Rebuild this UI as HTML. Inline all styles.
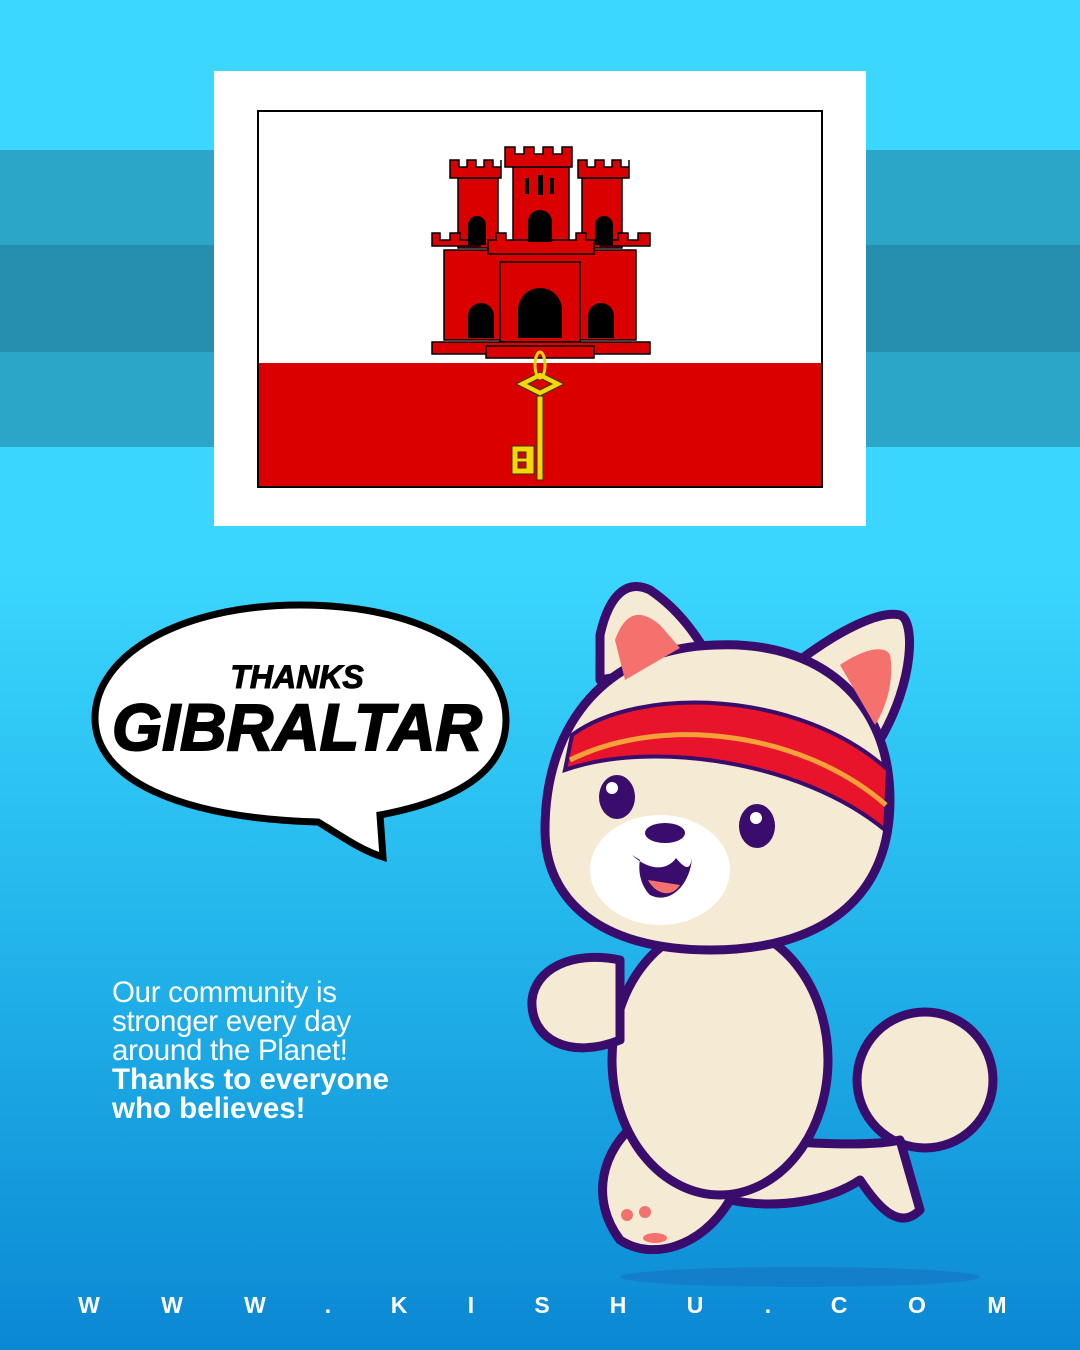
<!DOCTYPE html>
<html><head><meta charset="utf-8"><style>
body{margin:0}
#p{position:relative;width:1080px;height:1350px;overflow:hidden;background:linear-gradient(#3bd7ff 0%,#3bd6fe 42%,#22b4ea 70%,#0b88d3 100%);font-family:"Liberation Sans",sans-serif}
.s{position:absolute;left:0;width:1080px}
#txt{position:absolute;left:112px;top:978px;color:#fff;font-size:29.5px;line-height:29px;font-weight:300;letter-spacing:-0.3px}
#txt b{font-weight:700;letter-spacing:0}
#ft{position:absolute;top:1292px;left:0;width:1080px;color:#fff;font-size:23px;font-weight:700}
#ft span{position:absolute;transform:translateX(-50%)}
</style></head><body><div id="p">
<div class="s" style="top:150px;height:95px;background:#2ba5c8"></div>
<div class="s" style="top:245px;height:107px;background:#258eaf"></div>
<div class="s" style="top:352px;height:95px;background:#2ba5c8"></div>
<div style="position:absolute;left:214px;top:71px;width:652px;height:455px;background:#fff"></div>
<svg style="position:absolute;left:0;top:0" width="1080" height="1350">
<rect x="258" y="111" width="564" height="376" fill="#fff" stroke="#000" stroke-width="2"/>
<rect x="259" y="363" width="562" height="123" fill="#da0000"/>
<g fill="#da0000" stroke="#000" stroke-width="1.5">
<rect x="458" y="178" width="40" height="70"/><rect x="582" y="178" width="40" height="70"/>
<path d="M450 160h9v7h8v-7h9v7h8v-7h9v7h8v-7h0v18h-51z"/>
<path d="M578 160h9v7h8v-7h9v7h8v-7h9v7h8v-7v18h-51z"/>
<rect x="513" y="167" width="56" height="80"/>
<path d="M505 147h10v7h9v-7h10v7h9v-7h10v7h9v-7h10v20h-67z"/>
<rect x="444" y="250" width="192" height="90"/>
<path d="M432 233h8v7h10v-7h10v7h10v-7h10v13h-48z"/><path d="M600 233h8v7h10v-7h10v7h10v-7h12v13h-50z"/>
<path d="M488 240h8v-7h10v7h70v-7h10v7h8v14h-106z"/>
<rect x="500" y="262" width="80" height="80"/>
<path d="M432 342h218v12h-218z"/><path d="M486 346h108v12h-108z"/>
</g>
<g fill="#000">
<path d="M468 338v-22a10 10 0 0 1 26 0v22z"/><path d="M588 338v-22a10 10 0 0 1 26 0v22z"/>
<path d="M518 338v-28a22 22 0 0 1 44 0v28z"/>
<path d="M468 245v-20a9 9 0 0 1 18 0v20z"/><path d="M595 245v-20a9 9 0 0 1 18 0v20z"/>
<path d="M528 242v-20a12 12 0 0 1 24 0v20z"/>
<rect x="525" y="178" width="4" height="16"/><rect x="538" y="175" width="5" height="20"/><rect x="550" y="178" width="4" height="16"/>
</g>
<g fill="#f5d800" stroke="#333" stroke-width="1">
<path d="M540 372l24 12-24 12-24-12z M540 378l-12 6 12 6 12-6z" fill-rule="evenodd"/>
<rect x="537" y="396" width="6" height="84"/>
<path d="M512 446h22v28h-22z M518 452v6h8v-6z M518 462v6h8v-6z" fill-rule="evenodd"/>
<ellipse cx="540" cy="365" rx="5" ry="13" fill="none" stroke="#f5d800" stroke-width="3"/>
</g>
<path d="M300 605C430 605 506 660 506 720C506 770 460 800 380 815L383 857C360 850 340 835 318 822C180 818 95 780 95 718C95 655 180 605 300 605Z" fill="#fff" stroke="#000" stroke-width="7"/>
<text x="297" y="688" text-anchor="middle" font-family="Liberation Sans" font-weight="700" font-style="italic" font-size="32" stroke="#000" stroke-width="1">THANKS</text>
<text x="297" y="750" text-anchor="middle" font-family="Liberation Sans" font-weight="700" font-style="italic" font-size="66" stroke="#000" stroke-width="2" textLength="370" lengthAdjust="spacingAndGlyphs">GIBRALTAR</text>
<ellipse cx="800" cy="1277" rx="180" ry="10" fill="#1577c6" opacity=".7"/>
<g stroke="#3a0c6b" stroke-width="9" stroke-linejoin="round">
<circle cx="925" cy="1080" r="68" fill="#f5ead3"/>
<path d="M640 1120C600 1150 590 1200 620 1240C650 1260 700 1250 730 1200C780 1210 830 1200 860 1180C880 1210 900 1230 920 1210L900 1140C860 1150 720 1140 640 1120Z" fill="#f5ead3"/>
<ellipse cx="720" cy="1060" rx="108" ry="135" fill="#f5ead3"/>
<path d="M620 960C570 950 535 970 532 1000C530 1040 570 1060 620 1040Z" fill="#f5ead3"/>
<path d="M600 635C610 590 630 580 650 590C680 610 700 640 710 660L600 680Z" fill="#f5ead3"/>
<path d="M800 660C840 630 880 610 900 615C915 620 915 680 880 740L800 700Z" fill="#f5ead3"/>
<path d="M715 645C820 640 890 700 890 800C890 900 820 950 710 950C600 950 545 900 545 830C545 720 610 648 715 645Z" fill="#f5ead3"/>
</g>
<path d="M615 640C625 612 640 608 660 625L680 648L625 680Z" fill="#f4716e"/>
<path d="M840 665C865 648 885 645 890 655C895 680 885 710 875 725Z" fill="#f4716e"/>
<path d="M572 735C640 685 800 690 888 770L885 830C800 760 650 740 565 770Z" fill="#e8142c" stroke="#3a0c6b" stroke-width="4"/>
<path d="M570 760C660 715 800 730 886 805" fill="none" stroke="#f5a13a" stroke-width="5"/>
<ellipse cx="660" cy="870" rx="70" ry="55" fill="#fff"/>
<ellipse cx="617" cy="797" rx="18" ry="22" fill="#3a0c6b"/><circle cx="612" cy="788" r="6" fill="#fff"/>
<ellipse cx="757" cy="826" rx="18" ry="22" fill="#3a0c6b"/><circle cx="756" cy="818" r="6" fill="#fff"/>
<ellipse cx="665" cy="833" rx="20" ry="10" fill="#3a0c6b"/>
<path d="M632 855C650 872 668 870 676 858C686 870 690 870 692 858C690 885 670 905 650 895C640 885 638 870 640 860Z" fill="#3a0c6b"/>
<path d="M648 880C656 895 672 898 680 885Z" fill="#f4716e"/>
<circle cx="627" cy="1215" r="6" fill="#f4716e"/><circle cx="645" cy="1212" r="6" fill="#f4716e"/><ellipse cx="655" cy="1238" rx="12" ry="5" fill="#f4716e"/>
</svg>
<div id="txt">Our community is<br>stronger every day<br>around the Planet!<br><b>Thanks to everyone<br>who believes!</b></div>
<div id="ft"><span style="left:89px">W</span><span style="left:172px">W</span><span style="left:255px">W</span><span style="left:328px">.</span><span style="left:399px">K</span><span style="left:471px">I</span><span style="left:542px">S</span><span style="left:618px">H</span><span style="left:695px">U</span><span style="left:768px">.</span><span style="left:839px">C</span><span style="left:917px">O</span><span style="left:997px">M</span></div>
</div></body></html>
